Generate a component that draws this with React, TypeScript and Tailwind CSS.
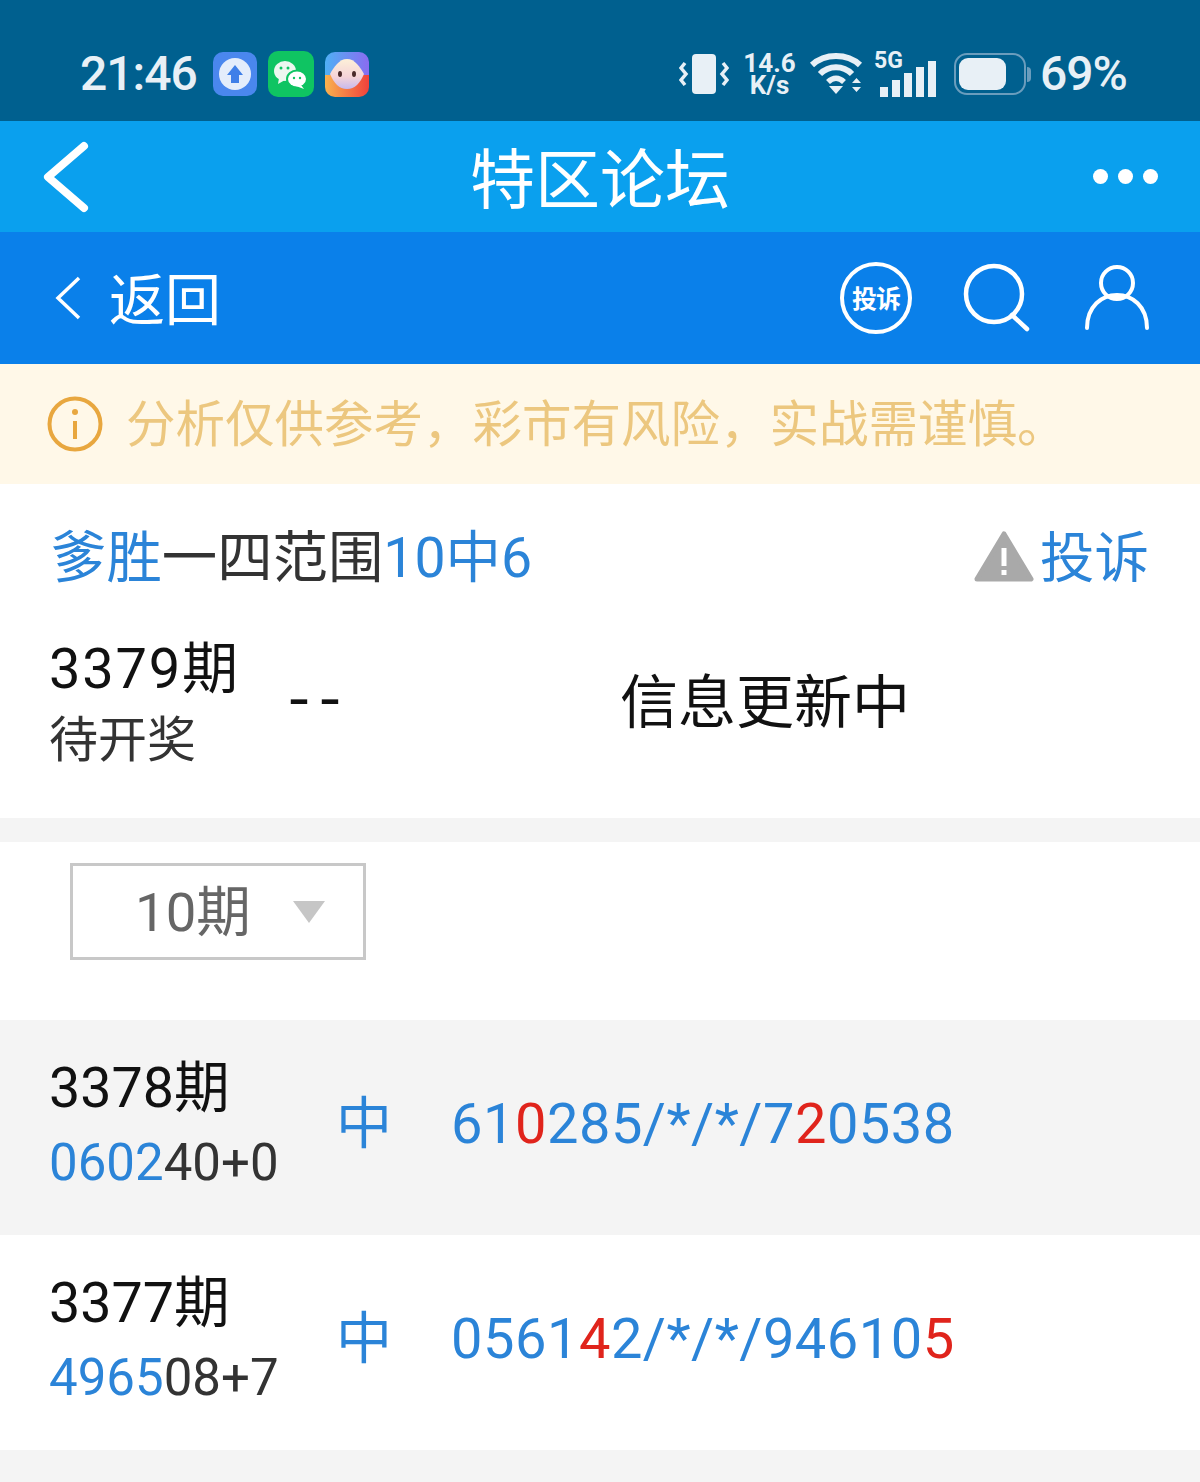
import React from "react";

const FONT = "font-['Roboto','Noto_Sans_CJK_SC',sans-serif]";

function AppIcons() {
  return (
    <div className="flex items-center gap-[11px]">
      <svg width="44" height="44" viewBox="0 0 44 44">
        <rect width="44" height="44" rx="10" fill="#4a87ee" />
        <circle cx="22" cy="22" r="16" fill="#e4edfb" />
        <path d="M22 13 L30 23 H26 V31 H18 V23 H14 Z" fill="#3f7fe8" />
      </svg>
      <svg width="46" height="46" viewBox="0 0 46 46">
        <rect width="46" height="46" rx="10" fill="#0fc462" />
        <ellipse cx="17" cy="20" rx="11" ry="10" fill="#eef7f0" />
        <path d="M11 27 L10 33 L17 29 Z" fill="#eef7f0" />
        <ellipse cx="29" cy="28" rx="10" ry="8.5" fill="#0fc462" stroke="#0fc462" strokeWidth="2" />
        <ellipse cx="29" cy="28" rx="9" ry="7.5" fill="#fff" />
        <path d="M33 34 L36 38 L28 35 Z" fill="#fff" />
        <circle cx="13" cy="17" r="1.5" fill="#0fc462" />
        <circle cx="20" cy="17" r="1.5" fill="#0fc462" />
        <circle cx="26" cy="27" r="1.2" fill="#0fc462" />
        <circle cx="32" cy="27" r="1.2" fill="#0fc462" />
      </svg>
      <svg width="44" height="45" viewBox="0 0 44 45">
        <defs>
          <linearGradient id="pt" x1="0" y1="0" x2="1" y2="0">
            <stop offset="0" stopColor="#4fb0f5" />
            <stop offset="1" stopColor="#8a6cf0" />
          </linearGradient>
          <linearGradient id="pb" x1="0" y1="0" x2="1" y2="0">
            <stop offset="0" stopColor="#f9b24e" />
            <stop offset="1" stopColor="#f0413c" />
          </linearGradient>
          <linearGradient id="pf" x1="0" y1="0" x2="0" y2="1">
            <stop offset="0" stopColor="#fdf0d8" />
            <stop offset="0.6" stopColor="#f5d3d8" />
            <stop offset="1" stopColor="#c6b9ee" />
          </linearGradient>
          <clipPath id="pc">
            <rect width="44" height="45" rx="10" />
          </clipPath>
        </defs>
        <g clipPath="url(#pc)">
          <rect width="44" height="23" fill="url(#pt)" />
          <rect y="23" width="44" height="22" fill="url(#pb)" />
        </g>
        <path d="M22 7 C30 7 35 15 39 22 C35 31 30 37 22 37 C14 37 9 31 5 22 C9 15 14 7 22 7 Z" fill="url(#pf)" />
        <ellipse cx="15" cy="22" rx="2" ry="3" fill="#4a2a2a" />
        <ellipse cx="29" cy="22" rx="2" ry="3" fill="#4a2a2a" />
      </svg>
    </div>
  );
}

function StatusRight() {
  const c = "#e8f0f6";
  return (
    <div className="flex items-center" style={{ color: c }}>
      <svg width="50" height="42" viewBox="0 0 50 42" className="mr-[15px]">
        <rect x="13" y="1" width="24" height="40" rx="4" fill={c} />
        <path d="M6 10 L2 15 L7 21 L2 27 L6 32" fill="none" stroke={c} strokeWidth="3.5" />
        <path d="M44 10 L48 15 L43 21 L48 27 L44 32" fill="none" stroke={c} strokeWidth="3.5" />
      </svg>
      <div className="w-[51px] flex flex-col items-center text-[26px] leading-[22px] font-bold mr-[14px]">
        <span>14.6</span>
        <span>K/s</span>
      </div>
      <svg width="54" height="44" viewBox="0 0 54 44" className="mr-[11px]">
        <path d="M3 13 C16 1 38 1 51 13" fill="none" stroke={c} strokeWidth="6" />
        <path d="M11 22 C20 13 34 13 43 22" fill="none" stroke={c} strokeWidth="6" />
        <path d="M19 30 C24 25 30 25 35 30" fill="none" stroke={c} strokeWidth="5.5" />
        <path d="M20 34 H34 L27 42 Z" fill={c} />
        <path d="M43 31 L47.5 26 L52 31 Z M43 35 H52 L47.5 40 Z" fill={c} />
      </svg>
      <div className="relative w-[62px] h-[44px] mr-[18px]">
        <span className="absolute left-0 top-[-3px] text-[23px] leading-[23px] font-bold">5G</span>
        <div className="absolute left-[6px] bottom-[-1px] flex items-end gap-[4px]">
          <div className="w-[8px] h-[10px] bg-[#e8f0f6]" />
          <div className="w-[8px] h-[17px] bg-[#e8f0f6]" />
          <div className="w-[8px] h-[24px] bg-[#e8f0f6]" />
          <div className="w-[8px] h-[30px] bg-[#e8f0f6]" />
          <div className="w-[8px] h-[36px] bg-[#e8f0f6]" />
        </div>
      </div>
      <div className="relative w-[72px] h-[42px] rounded-[13px] border-[2px] border-[#6a9dbd] p-[3px] mr-[1px]">
        <div className="w-[47px] h-full rounded-[9px] bg-[#e8f0f6]" />
      </div>
      <div className="w-[4px] h-[15px] rounded-r-full bg-[#6a9dbd] mr-[9px]" />
      <span className="w-[88px] text-[48px] leading-none font-medium tracking-[-1px]">69%</span>
    </div>
  );
}

function Num({ children, red }: { children: React.ReactNode; red?: boolean }) {
  return <span className={red ? "text-[#e0241c]" : ""}>{children}</span>;
}

function HistoryRow({
  issue,
  blue,
  rest,
  nums,
  gray,
}: {
  issue: string;
  blue: string;
  rest: string;
  nums: React.ReactNode;
  gray?: boolean;
}) {
  return (
    <div className={`flex h-[215px] items-center pl-[49px] pb-[7px] ${gray ? "bg-[#f4f4f4]" : "bg-white"}`}>
      <div className="w-[290px] flex flex-col">
        <span className="text-[55.6px] leading-[70px] text-[#111]">{issue}</span>
        <span className="mt-[8px] text-[51px] leading-[64px] text-[#333]">
          <span className="text-[#2b84d8]">{blue}</span>
          {rest}
        </span>
      </div>
      <span className="w-[115px] text-[56px] leading-none text-[#2b84d8] -ml-[3px]">中</span>
      <span className="text-[56px] leading-none text-[#2b84d8] tracking-[0.5px]">{nums}</span>
    </div>
  );
}

export default function App() {
  return (
    <div className={`w-[1200px] h-[1482px] overflow-hidden bg-[#f4f4f4] ${FONT}`}>
      <div className="h-[121px] bg-[#00608f] flex items-center justify-between pl-[80px] pr-[72px] pt-[27px]">
        <div className="flex items-center">
          <span className="w-[133px] text-[48px] leading-none font-medium tracking-[-1px] text-[#e8f0f6]">21:46</span>
          <AppIcons />
        </div>
        <StatusRight />
      </div>

      <div className="h-[111px] bg-[#0aa0ee] flex items-center justify-between pl-[41px] pr-[42px] relative">
        <svg width="50" height="76" viewBox="0 0 50 76">
          <path d="M43 7 L7 38 L43 69" fill="none" stroke="#fff" strokeWidth="8" strokeLinecap="round" strokeLinejoin="round" />
        </svg>
        <span className="absolute inset-x-0 mt-[9px] text-center text-[65px] leading-none text-white">特区论坛</span>
        <div className="flex gap-[10px]">
          <span className="w-[15px] h-[15px] rounded-full bg-white" />
          <span className="w-[15px] h-[15px] rounded-full bg-white" />
          <span className="w-[15px] h-[15px] rounded-full bg-white" />
        </div>
      </div>

      <div className="h-[132px] bg-[#0a80ea] flex items-center justify-between pl-[54px] pr-[50px]">
        <div className="flex items-center gap-[27px]">
          <svg width="28" height="46" viewBox="0 0 28 46">
            <path d="M25 3 L4 23 L25 43" fill="none" stroke="#fff" strokeWidth="3.5" />
          </svg>
          <span className="mt-[6px] text-[56px] leading-none text-white">返回</span>
        </div>
        <div className="flex items-center">
          <div className="w-[72px] h-[72px] rounded-full border-[4px] border-white flex items-center justify-center pt-[3px] text-[25px] font-bold text-white tracking-[-1px]">
            投诉
          </div>
          <svg width="70" height="70" viewBox="0 0 70 70" className="ml-[50px]">
            <circle cx="32" cy="31" r="28" fill="none" stroke="#fff" strokeWidth="4.5" />
            <path d="M50 52 L65 66" stroke="#fff" strokeWidth="4.5" strokeLinecap="round" />
          </svg>
          <svg width="66" height="68" viewBox="0 0 66 68" className="ml-[52px]">
            <circle cx="33" cy="19" r="16" fill="none" stroke="#fff" strokeWidth="4" />
            <path d="M3 64 C3 20 63 20 63 64" fill="none" stroke="#fff" strokeWidth="4" strokeLinecap="round" />
          </svg>
        </div>
      </div>

      <div className="h-[120px] bg-[#fff8e8] flex items-center pl-[47px]">
        <svg width="56" height="56" viewBox="0 0 56 56" className="mr-[23px]">
          <circle cx="28" cy="28" r="25.5" fill="none" stroke="#e8a73f" strokeWidth="4" />
          <circle cx="28" cy="16" r="3" fill="#e8a73f" />
          <path d="M28 25 V43" stroke="#e8a73f" strokeWidth="4" />
        </svg>
        <span className="mt-[4px] text-[49.5px] leading-none text-[#ecc77f]">分析仅供参考，彩市有风险，实战需谨慎。</span>
      </div>

      <div className="h-[145px] bg-white flex items-center justify-between pl-[51px] pr-[51px]">
        <span className="mt-[4px] text-[55.4px] leading-none text-[#333]">
          <span className="text-[#2b84d8]">爹胜</span>一四范围<span className="text-[#2b84d8]">10中6</span>
        </span>
        <div className="flex items-center gap-[6px] text-[#2b84d8]">
          <svg width="60" height="52" viewBox="0 0 60 52">
            <path d="M30 3 L57 48 H3 Z" fill="#a9a9a9" stroke="#a9a9a9" strokeWidth="5" strokeLinejoin="round" />
            <rect x="27.5" y="17" width="5" height="18" fill="#fff" />
            <rect x="27.5" y="39" width="5" height="5" fill="#fff" />
          </svg>
          <span className="mt-[4px] text-[54.5px] leading-none">投诉</span>
        </div>
      </div>

      <div className="h-[189px] bg-white flex pl-[49px]">
        <div className="w-[232px] flex flex-col pt-[5px]">
          <span className="text-[56px] leading-[70px] text-[#111] tracking-[1.8px]">3379期</span>
          <span className="mt-[7px] text-[49px] leading-[60px] text-[#333]">待开奖</span>
        </div>
        <span className="w-[339px] text-[60px] leading-[144px] text-[#111] font-['Liberation_Mono',monospace] -tracking-[5px]">--</span>
        <span className="text-[58px] leading-[148px] text-[#111]">信息更新中</span>
      </div>

      <div className="mt-[24px] h-[178px] bg-white pl-[70px] pt-[21px]">
        <div className="w-[296px] h-[97px] border-[3px] border-[#c8c8c8] flex items-center pl-[62px]">
          <span className="mt-[2px] text-[54.5px] leading-none text-[#666] w-[158px]">10期</span>
          <svg width="32" height="22" viewBox="0 0 32 22">
            <path d="M0 0 H32 L16 22 Z" fill="#c6c6c6" />
          </svg>
        </div>
      </div>

      <HistoryRow
        gray
        issue="3378期"
        blue="0602"
        rest="40+0"
        nums={
          <>
            61<Num red>0</Num>285/*/*/7<Num red>2</Num>0538
          </>
        }
      />
      <HistoryRow
        issue="3377期"
        blue="4965"
        rest="08+7"
        nums={
          <>
            0561<Num red>4</Num>2/*/*/94610<Num red>5</Num>
          </>
        }
      />
    </div>
  );
}
